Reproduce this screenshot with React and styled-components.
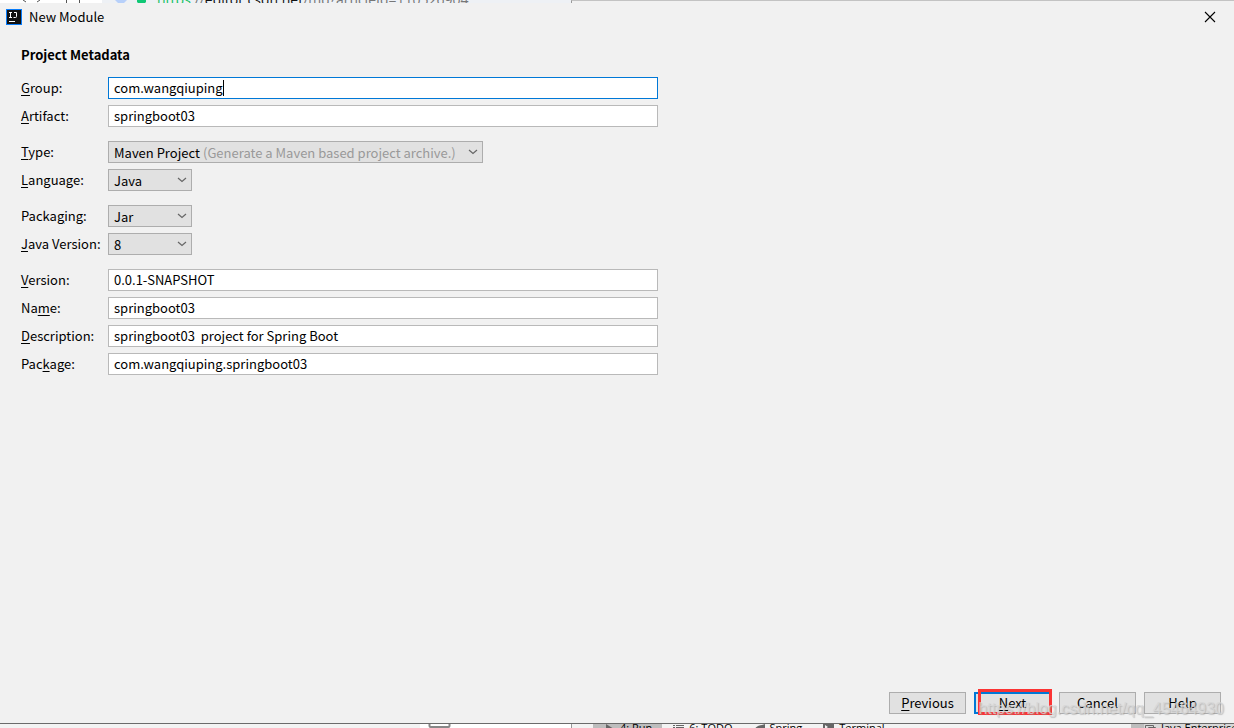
import React from "react"
import styled, { createGlobalStyle } from "styled-components"

const GlobalStyle = createGlobalStyle`
  * {
    box-sizing: border-box;
  }
  body {
    margin: 0;
    background: #f1f1f1;
    color: #000;
    font-family: "Noto Sans CJK SC", "Noto Sans", sans-serif;
    font-size: 13px;
  }
  input, select, button {
    font: inherit;
    color: inherit;
    margin: 0;
    border-radius: 0;
    outline: none;
  }
`

const Screen = styled.div`
  position: relative;
  display: flex;
  flex-direction: column;
  min-height: 100vh;
  overflow: hidden;
`

/* what is left visible of the browser above the dialog */
const BrowserStrip = styled.div`
  display: flex;
  height: 3px;
  overflow: hidden;
`
const NavPart = styled.div`
  flex: 0 0 102px;
  background: #fff;
`
const AddressPart = styled.div`
  display: flex;
  flex: 0 0 469px;
  align-items: flex-end;
  padding-left: 13px;
  background: #eef1f5;
  font-family: "Open Sans", sans-serif;
  font-size: 14px;
  line-height: 6px;
  color: #777;
  white-space: pre;
`
const AddressIcons = styled.svg`
  flex: 0 0 auto;
  margin-right: 8px;
`
const Scheme = styled.span`
  color: #10c060;
`
const Host = styled.span`
  color: #111;
`
const StripRest = styled.div`
  flex: 1;
  border-top: 1px solid #c3c3c3;
  border-left: 1px solid #999;
`

const TitleBar = styled.header`
  display: flex;
  align-items: center;
  height: 28px;
  padding: 0 18px 0 6px;
`
const Title = styled.h1`
  flex: 1;
  margin: 0 0 0 7px;
  font-size: 13px;
  line-height: 20px;
  font-weight: 400;
`
const CloseButton = styled.button`
  display: flex;
  padding: 0;
  border: none;
  background: none;
`

const Form = styled.form`
  display: flex;
  flex: 1;
  flex-direction: column;
  padding: 14px 13px 9px 21px;
`
const Heading = styled.h2`
  margin: 0 0 12px;
  font-size: 13px;
  line-height: 20px;
  font-weight: 700;
`
const Fields = styled.div`
  display: flex;
  flex-direction: column;
  gap: 14px;
  max-width: 637px;
`
const Group = styled.div`
  display: grid;
  grid-template-columns: 87px 1fr;
  row-gap: 6px;
`
const Label = styled.label`
  line-height: 22px;
  white-space: nowrap;

  u {
    text-underline-offset: 2px;
  }
`
const InputWrap = styled.div`
  position: relative;
  display: flex;
`
const TextInput = styled.input`
  width: 100%;
  height: 22px;
  padding: 0 5px 2px;
  border: 1px solid ${({ $active }) => ($active ? "#0078d7" : "#b9b9b9")};
  background: #fff;
`
const Caret = styled.span`
  position: absolute;
  top: 3px;
  left: 115px;
  width: 1px;
  height: 16px;
  background: #000;
`
const SelectWrap = styled.div`
  position: relative;
  width: ${({ $wide }) => ($wide ? "375px" : "84px")};
  height: 22px;
`
const Select = styled.select`
  appearance: none;
  width: 100%;
  height: 22px;
  padding: 0 5px;
  border: 1px solid #adadad;
  background: #e1e1e1;
`
const Hint = styled.span`
  position: absolute;
  top: 0;
  left: 95px;
  line-height: 24px;
  color: #999;
  white-space: nowrap;
  pointer-events: none;
`
const Arrow = styled.svg`
  position: absolute;
  top: 8px;
  right: 5px;
  pointer-events: none;
`

const Footer = styled.footer`
  display: flex;
  justify-content: flex-end;
  gap: 8px;
  margin-top: auto;
`
const Button = styled.button`
  position: relative;
  width: 77px;
  height: 22px;
  padding: 0;
  border: ${({ $primary }) =>
    $primary ? "2px solid #0078d7" : "1px solid #adadad"};
  background: #e1e1e1;
  line-height: 18px;

  u {
    text-underline-offset: 2px;
  }
`
const Marker = styled.span`
  position: absolute;
  inset: -5px -3px -3px 2px;
  border: 3px solid #fb3434;
`
const Watermark = styled.div`
  position: absolute;
  right: 10px;
  bottom: 9px;
  font-family: "Liberation Sans", sans-serif;
  font-size: 16px;
  line-height: 20px;
  color: rgba(215, 215, 215, 0.8);
  text-shadow: 1px 1px 1px rgba(150, 150, 150, 0.5);
  pointer-events: none;
`

/* top edge of the IDE status bar behind the dialog */
const StatusStrip = styled.div`
  display: flex;
  height: 5px;
  overflow: hidden;
  border-top: 1px solid #6b6b6b;
  background: #f3f3f3;
  font-family: "Open Sans", sans-serif;
  font-size: 11px;
  line-height: 8px;
  white-space: nowrap;
`
const Editor = styled.div`
  flex: 0 0 572px;
  padding-left: 428px;
  border-right: 1px solid #999;
  background: linear-gradient(to right, #f3f3f3 420px, #fff 420px);
`
const Tools = styled.div`
  display: flex;
  flex: 1;
  padding-left: 21px;
`
const Tool = styled.span`
  display: flex;
  gap: 4px;
  height: 12px;
  padding: 0 10px;
  background: ${({ $active }) => ($active ? "#bdbdbd" : "none")};

  svg {
    flex: 0 0 auto;
  }
`
const JavaTool = styled(Tool)`
  flex: 0 0 103px;
  min-width: 0;
  padding: 0 0 0 13px;
  background: linear-gradient(to right, #bdbdbd 13px, #d8d8d8 13px);
`

const TOOLS = [
  { text: "4: Run", active: true, icon: <path d="M3 0l8 5-8 5z" /> },
  { text: "6: TODO", icon: <path d="M1 1h2v1H1zM4 1h8v1H4zM1 3h2v1H1zM4 3h8v1H4z" /> },
  { text: "Spring", icon: <path d="M12 0v6c-2 5-8 5-11 2 0-5 5-7 8-7z" /> },
  { text: "Terminal", icon: <path d="M1 0h11v10H1zM3 1l3 2-3 2z" fillRule="evenodd" /> },
]

const SelectField = ({ id, value, hint }) => (
  <SelectWrap $wide={!!hint}>
    <Select id={id} defaultValue={value}>
      <option>{value}</option>
    </Select>
    {hint && <Hint>{hint}</Hint>}
    <Arrow width="10" height="6" viewBox="0 0 10 6" fill="none">
      <path d="M1 1l4 3.5L9 1" stroke="#666" strokeWidth="1.2" />
    </Arrow>
  </SelectWrap>
)

const TextField = ({ id, value, active }) => (
  <InputWrap>
    <TextInput id={id} defaultValue={value} $active={active} spellCheck={false} />
    {active && <Caret />}
  </InputWrap>
)

const App = () => (
  <>
    <GlobalStyle />
    <Screen>
      <BrowserStrip>
        <NavPart>
          <svg width="102" height="3" viewBox="0 0 102 3" fill="none" stroke="#555" display="block">
            <path d="M23 0l3 2M37 2l3-2M66.500 0v3M79.500 0v3" />
          </svg>
        </NavPart>
        <AddressPart>
          <AddressIcons width="34" height="3" viewBox="0 0 34 3">
            <path d="M0 0h12l-3 3H3z" fill="#b7d0fa" />
            <path d="M22 0h9v2l-1 1h-7l-1-1z" fill="#10c875" />
          </AddressIcons>
          <Scheme>https</Scheme>://<Host>editor.csdn.net</Host>/md?articleId=110526904
        </AddressPart>
        <StripRest />
      </BrowserStrip>

      <TitleBar>
        <svg width="16" height="16" viewBox="0 0 16 16">
          <rect width="16" height="16" fill="#087cfa" />
          <rect x="1" y="1" width="14" height="14" fill="#111" />
          <path
            d="M3 3.500h3M4.500 3.500v5M3 8.500h3M8 3.500h2.500v4q0 1-1 1h-2M3 12.500h6"
            stroke="#fff"
            fill="none"
          />
        </svg>
        <Title>New Module</Title>
        <CloseButton type="button" aria-label="Close">
          <svg width="12" height="12" viewBox="0 0 12 12">
            <path d="M1 1l10 10M11 1L1 11" stroke="#000" strokeWidth="1.1" />
          </svg>
        </CloseButton>
      </TitleBar>

      <Form onSubmit={e => e.preventDefault()}>
        <Heading>Project Metadata</Heading>
        <Fields>
          <Group>
            <Label htmlFor="group"><u>G</u>roup:</Label>
            <TextField id="group" value="com.wangqiuping" active />
            <Label htmlFor="artifact"><u>A</u>rtifact:</Label>
            <TextField id="artifact" value="springboot03" />
          </Group>
          <Group>
            <Label htmlFor="type"><u>T</u>ype:</Label>
            <SelectField
              id="type"
              value="Maven Project"
              hint="(Generate a Maven based project archive.)"
            />
            <Label htmlFor="language"><u>L</u>anguage:</Label>
            <SelectField id="language" value="Java" />
          </Group>
          <Group>
            <Label htmlFor="packaging">Packa<u>g</u>ing:</Label>
            <SelectField id="packaging" value="Jar" />
            <Label htmlFor="java"><u>J</u>ava Version:</Label>
            <SelectField id="java" value="8" />
          </Group>
          <Group>
            <Label htmlFor="version"><u>V</u>ersion:</Label>
            <TextField id="version" value="0.0.1-SNAPSHOT" />
            <Label htmlFor="name">Na<u>m</u>e:</Label>
            <TextField id="name" value="springboot03" />
            <Label htmlFor="description"><u>D</u>escription:</Label>
            <TextField id="description" value="springboot03  project for Spring Boot" />
            <Label htmlFor="package">Pac<u>k</u>age:</Label>
            <TextField id="package" value="com.wangqiuping.springboot03" />
          </Group>
        </Fields>
        <Footer>
          <Button type="button"><u>P</u>revious</Button>
          <Button type="submit" $primary>
            <u>N</u>ext
            <Marker />
          </Button>
          <Button type="button">Cancel</Button>
          <Button type="button">Help</Button>
        </Footer>
      </Form>

      <StatusStrip>
        <Editor>
          <svg width="24" height="4" viewBox="0 0 24 4" fill="none" display="block">
            <path d="M1.500 0v2q0 1 1 1h18q1 0 1-1V0" stroke="#888" strokeWidth="2" />
          </svg>
        </Editor>
        <Tools>
          {TOOLS.map(({ text, active, icon }) => (
            <Tool key={text} $active={active}>
              <svg width="13" height="12" viewBox="0 0 13 12" fill="#666">{icon}</svg>
              {text}
            </Tool>
          ))}
        </Tools>
        <JavaTool>
          <svg width="13" height="12" viewBox="0 0 13 12" fill="none" stroke="#666">
            <path d="M1.500 1.500h8v8h-8zM4.500 3.500h7v8h-7z" />
          </svg>
          Java Enterprise
        </JavaTool>
      </StatusStrip>
      <Watermark>https://blog.csdn.net/qq_45464930</Watermark>
    </Screen>
  </>
)

export default App
